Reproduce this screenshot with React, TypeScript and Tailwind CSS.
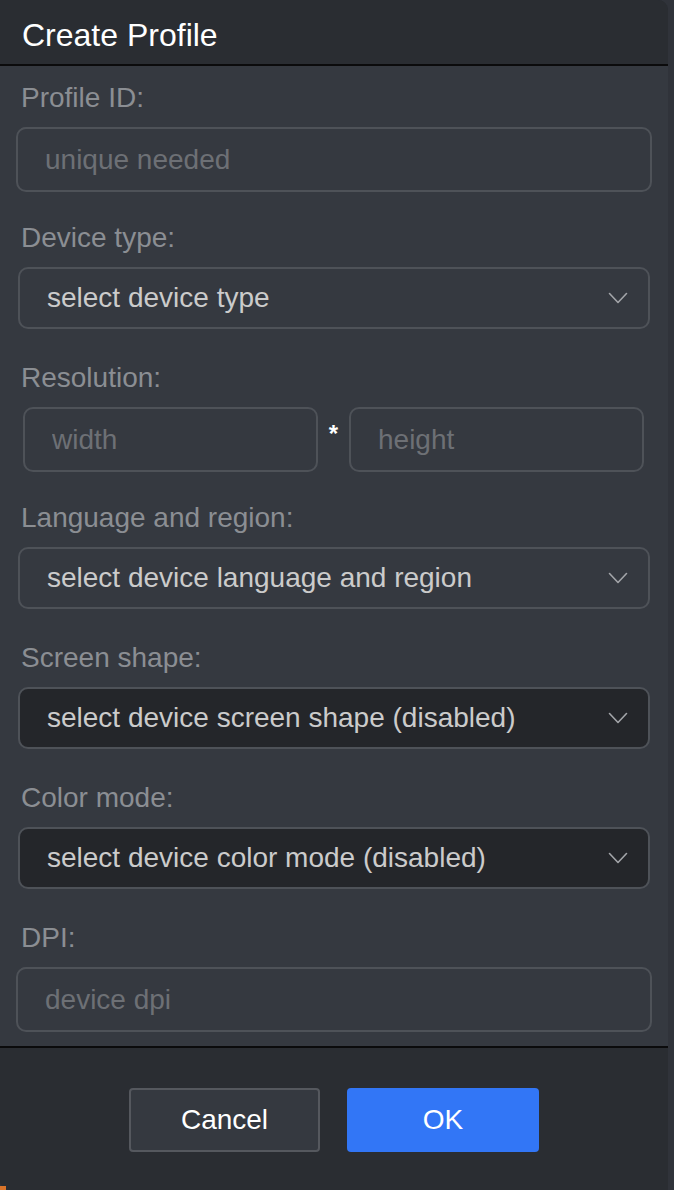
import { useState } from 'react';

const font = { fontFamily: '"Liberation Sans", Arial, Helvetica, sans-serif' };

function Chevron() {
  return (
    <svg width="20" height="12" viewBox="0 0 20 12" fill="none" className="shrink-0">
      <path d="M1.5 1.5 L10 10.5 L18.5 1.5" stroke="#a3a5a9" strokeWidth="1.6" strokeLinejoin="round" strokeLinecap="round" />
    </svg>
  );
}

function Label({ children }: { children: React.ReactNode }) {
  return <div className="pl-[5px] h-[28px] leading-[28px] mb-[15px] text-[28px] text-[#8b8e93]">{children}</div>;
}

function TextInput({ placeholder }: { placeholder: string }) {
  return (
    <input
      placeholder={placeholder}
      className="block w-full h-[65px] rounded-[10px] border-2 border-[#4e5258] bg-transparent pl-[27px] text-[28px] text-[#d0d0d0] placeholder:text-[#6d7075] outline-none"
      style={font}
    />
  );
}

function Select({ text, disabled }: { text: string; disabled?: boolean }) {
  return (
    <div
      className={
        disabled
          ? 'mx-[2px] h-[62px] rounded-[10px] border-2 border-[#4e5258] bg-[#24262a] flex items-center justify-between pl-[27px] pr-[20px]'
          : 'mx-[2px] h-[62px] rounded-[10px] border-2 border-[#4e5258] bg-transparent flex items-center justify-between pl-[27px] pr-[20px]'
      }
    >
      <span className="text-[28px] text-[#cbcbcb]">{text}</span>
      <Chevron />
    </div>
  );
}

export default function App() {
  const [open] = useState(true);
  if (!open) return null;

  return (
    <div className="w-[674px] h-[1190px] bg-[#30333a] overflow-hidden relative" style={font}>
      {/* dialog */}
      <div className="w-[668px] h-[1190px] flex flex-col rounded-tr-[10px] rounded-bl-[10px] overflow-hidden bg-[#2a2d32]">
        {/* header */}
        <div className="h-[64px] shrink-0 flex items-center pl-[22px] pt-[6px] bg-[#2a2d32]">
          <h1 className="text-[32px] text-white leading-none">Create Profile</h1>
        </div>
        <div className="h-[2px] bg-[#0b0b0c] shrink-0" />

        {/* body */}
        <div className="bg-[#353940] px-[16px] pt-[18px] pb-[14px] flex flex-col">
          <div className="h-[140px]">
            <Label>Profile ID:</Label>
            <TextInput placeholder="unique needed" />
          </div>

          <div className="h-[140px]">
            <Label>Device type:</Label>
            <Select text="select device type" />
          </div>

          <div className="h-[140px]">
            <Label>Resolution:</Label>
            <div className="flex items-center px-[7px]">
              <div className="w-[295px]">
                <TextInput placeholder="width" />
              </div>
              <span className="w-[31px] text-center text-[24px] text-white font-bold -mt-[12px]">*</span>
              <div className="w-[295px]">
                <TextInput placeholder="height" />
              </div>
            </div>
          </div>

          <div className="h-[140px]">
            <Label>Language and region:</Label>
            <Select text="select device language and region" />
          </div>

          <div className="h-[140px]">
            <Label>Screen shape:</Label>
            <Select text="select device screen shape (disabled)" disabled />
          </div>

          <div className="h-[140px]">
            <Label>Color mode:</Label>
            <Select text="select device color mode (disabled)" disabled />
          </div>

          <div>
            <Label>DPI:</Label>
            <TextInput placeholder="device dpi" />
          </div>
        </div>
        <div className="h-[2px] bg-[#0b0b0c] shrink-0" />

        {/* footer */}
        <div className="flex-1 flex justify-center gap-[27px] pt-[40px] bg-[#2a2d32]">
          <button className="w-[191px] h-[64px] rounded-[4px] border-2 border-[#55585e] bg-[#353940] text-[28px] text-white">
            Cancel
          </button>
          <button className="w-[192px] h-[64px] rounded-[4px] bg-[#3276f6] text-[28px] text-white">
            OK
          </button>
        </div>
      </div>
      <div className="absolute left-0 bottom-0 w-[6px] h-[4px] bg-[#d9742a]" />
    </div>
  );
}
